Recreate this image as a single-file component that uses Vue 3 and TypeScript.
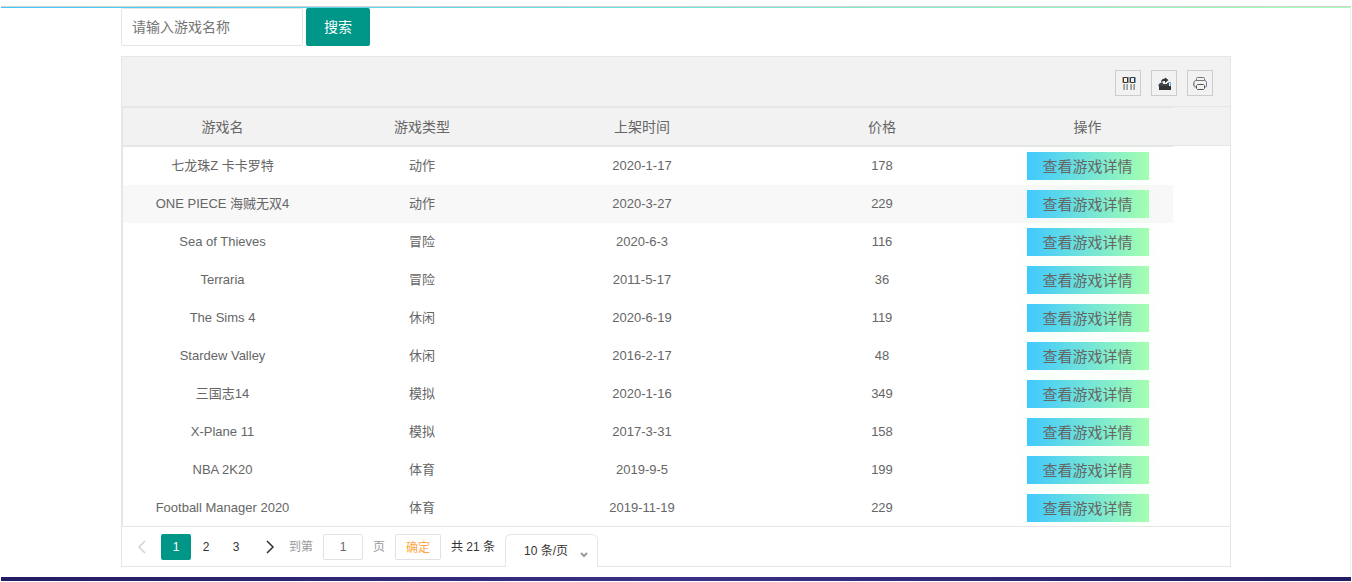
<script setup lang="ts">
import { ref } from 'vue'

interface Game {
  name: string
  type: string
  date: string
  price: number
}

const keyword = ref('')
const currentPage = ref(1)
const jumpPage = ref('1')
const pageSize = ref('10')
const headings = ['游戏名', '游戏类型', '上架时间', '价格', '操作']
const games: Game[] = [
  { name: '七龙珠Z 卡卡罗特', type: '动作', date: '2020-1-17', price: 178 },
  { name: 'ONE PIECE 海贼无双4', type: '动作', date: '2020-3-27', price: 229 },
  { name: 'Sea of Thieves', type: '冒险', date: '2020-6-3', price: 116 },
  { name: 'Terraria', type: '冒险', date: '2011-5-17', price: 36 },
  { name: 'The Sims 4', type: '休闲', date: '2020-6-19', price: 119 },
  { name: 'Stardew Valley', type: '休闲', date: '2016-2-17', price: 48 },
  { name: '三国志14', type: '模拟', date: '2020-1-16', price: 349 },
  { name: 'X-Plane 11', type: '模拟', date: '2017-3-31', price: 158 },
  { name: 'NBA 2K20', type: '体育', date: '2019-9-5', price: 199 },
  { name: 'Football Manager 2020', type: '体育', date: '2019-11-19', price: 229 },
]
</script>

<template>
  <main class="page">
    <div class="content">
      <form class="search" @submit.prevent>
        <input v-model="keyword" class="search-input" type="text" placeholder="请输入游戏名称" aria-label="请输入游戏名称" />
        <button class="search-button" type="submit">搜索</button>
      </form>

      <section class="view">
        <div class="tools">
          <button class="tool" type="button" aria-label="筛选列">
            <svg width="18" height="16" viewBox="0 0 18 16" fill="none">
              <path d="M4.500 2.500h4v5h-4zM11.500 2.500h4v5h-4z" stroke="#333" />
              <path d="M3.500 2v6M10.500 2v6" stroke="#e0a868" />
              <path d="M9.500 2v6M16.500 2v6" stroke="#6aa8dc" />
              <path d="M4.500 9v6M7.500 9v6M11.500 9v6M14.500 9v6" stroke="#e0a868" />
              <path d="M5.500 9v6M8.500 9v6M12.500 9v6M15.500 9v6" stroke="#6aa8dc" />
            </svg>
          </button>
          <button class="tool" type="button" aria-label="导出">
            <svg width="16" height="16" viewBox="0 0 16 16">
              <path d="M3 11h12v4H3z" fill="#333" />
              <path d="M2.500 10.500L5 7.500h2M14.500 11V7.500H12" fill="none" stroke="#6aa8dc" />
              <path d="M2 11l2-3h3v1h4V8h2v3z" fill="#444" />
              <path d="M5 7c0-2 2-3.500 4-3.500V2.500l3.500 2.500L9 8V6C7.500 6 6.500 6.500 5 7z" fill="#333" />
            </svg>
          </button>
          <button class="tool" type="button" aria-label="打印">
            <svg width="16" height="16" viewBox="0 0 16 16" fill="none">
              <path d="M5 5.500h7.500a2 2 0 0 1 2 2V11a1 1 0 0 1-1 1H13M4.500 12H3a1 1 0 0 1-1-1V7.500a2 2 0 0 1 2-2h1" stroke="#777782" />
              <path d="M4.500 5.500V3.500a1 1 0 0 1 1-1h6a1 1 0 0 1 1 1v2" stroke="#777" />
              <path d="M5.500 9.500h6l1 1v3l-1 1h-6l-1-1v-3z" stroke="#555" />
              <path d="M1.500 7.500v3" stroke="#a07868" />
              <path d="M14.500 7.500v3" stroke="#6878a8" />
            </svg>
          </button>
        </div>

        <div class="table-wrap">
          <table>
            <colgroup>
              <col class="col-name" />
              <col class="col-type" />
              <col class="col-date" />
              <col class="col-price" />
              <col class="col-action" />
            </colgroup>
            <thead>
              <tr>
                <th v-for="heading in headings" :key="heading" scope="col">{{ heading }}</th>
              </tr>
            </thead>
            <tbody>
              <tr v-for="(game, index) in games" :key="game.name" :class="{ hovered: index === 1 }">
                <td>{{ game.name }}</td>
                <td>{{ game.type }}</td>
                <td>{{ game.date }}</td>
                <td>{{ game.price }}</td>
                <td class="action"><button class="detail" type="button">查看游戏详情</button></td>
              </tr>
            </tbody>
          </table>
        </div>

        <nav class="pager" aria-label="分页">
          <button class="arrow prev" type="button" disabled aria-label="上一页">
            <svg width="12" height="14" viewBox="0 0 12 14" fill="none" stroke="currentColor" stroke-width="1.500"><path d="M9 1L3 7l6 6" /></svg>
          </button>
          <button
            v-for="page in 3"
            :key="page"
            class="page-number"
            :class="{ current: page === currentPage }"
            type="button"
            @click="currentPage = page"
          >{{ page }}</button>
          <button class="arrow next" type="button" aria-label="下一页">
            <svg width="12" height="14" viewBox="0 0 12 14" fill="none" stroke="currentColor" stroke-width="1.500"><path d="M3 1l6 6-6 6" /></svg>
          </button>
          <label class="jump">到第<input v-model="jumpPage" class="jump-input" type="text" />页</label>
          <button class="confirm" type="button">确定</button>
          <span class="total">共 21 条</span>
          <span class="size">
            <select v-model="pageSize" aria-label="每页条数">
              <option value="10">10 条/页</option>
              <option value="20">20 条/页</option>
              <option value="30">30 条/页</option>
            </select>
            <svg class="caret" width="10" height="8" viewBox="0 0 10 8" fill="none" stroke="#999" stroke-width="2"><path d="M2 2l3 3 3-3" /></svg>
          </span>
        </nav>
      </section>
    </div>
    <div class="footer-line"></div>
  </main>
</template>

<style>
body {
  margin: 0;
  background: #fff;
}
</style>

<style scoped>
.page {
  margin: 6px 1px 0;
  border-top: 1px solid #d2d2d2;
  color: #666;
  font: 14px/24px "Liberation Sans", "Noto Sans CJK SC", sans-serif;
}
.page::before {
  display: block;
  height: 1px;
  background: linear-gradient(90deg, #40c9ff, #a5ffb0);
  content: "";
}
.content {
  box-sizing: border-box;
  padding: 0 119px 10px 120px;
  border-right: 1px solid #eee;
}
* {
  box-sizing: border-box;
}
button,
input,
select {
  margin: 0;
  padding: 0;
  border: 0;
  background: none;
  color: inherit;
  font: inherit;
}
button {
  cursor: pointer;
}
.search {
  display: flex;
  gap: 3px;
  margin-bottom: 10px;
}
.search-input {
  width: 182px;
  height: 38px;
  padding: 0 10px;
  border: 1px solid #e6e6e6;
  border-radius: 2px;
}
.search-input::placeholder {
  color: #757575;
  opacity: 1;
}
.search-button {
  width: 64px;
  height: 38px;
  border-radius: 2px;
  background: #009688;
  color: #fff;
}
.view {
  border: 1px solid #e6e6e6;
}
.tools {
  display: flex;
  justify-content: flex-end;
  align-items: center;
  gap: 10px;
  height: 50px;
  padding: 2px 17px 0;
  border-bottom: 1px solid #e6e6e6;
  background: #f2f2f2;
}
.tool {
  display: flex;
  align-items: center;
  justify-content: center;
  width: 26px;
  height: 26px;
  border: 1px solid #ccc;
}
.table-wrap {
  border-left: 1px solid #e6e6e6;
  background: linear-gradient(#f2f2f2 38px, #e6e6e6 38px, #e6e6e6 39px, #fff 39px);
}
table {
  width: 1050px;
  border-spacing: 0;
  table-layout: fixed;
}
.col-name {
  width: 199px;
}
.col-type {
  width: 200px;
}
.col-date,
.col-price {
  width: 240px;
}
.col-action {
  width: 171px;
}
th {
  height: 40px;
  padding: 0;
  border-top: 1px solid #e6e6e6;
  border-bottom: 2px solid #e6e6e6;
  background: #f2f2f2;
  font-weight: 400;
}
td {
  height: 38px;
  padding: 0;
  font-size: 13px;
  text-align: center;
}
.hovered {
  background: #f8f8f8;
}
.detail {
  display: block;
  width: 122px;
  height: 28px;
  margin: 0 auto;
  padding-top: 2px;
  background: linear-gradient(90deg, #40c9ff, #a5ffb0);
  box-shadow: 0 0 20px rgba(165, 255, 176, 0.1);
  font-size: 15px;
  line-height: 26px;
}
.pager {
  display: flex;
  align-items: flex-start;
  height: 40px;
  margin-top: -1px;
  padding: 7px 7px 0;
  border-top: 1px solid #e6e6e6;
  background: #fff;
  color: #333;
  font-size: 12px;
  line-height: 26px;
}
.arrow {
  display: flex;
  align-items: center;
  justify-content: center;
  height: 26px;
}
.prev {
  width: 26px;
  margin-right: 6px;
  color: #d2d2d2;
}
.next {
  width: 38px;
}
.page-number {
  width: 30px;
  height: 26px;
  border-radius: 2px;
}
.current {
  background: #009688;
  color: #fff;
}
.jump {
  display: flex;
  gap: 10px;
  color: #999;
}
.jump-input {
  width: 40px;
  height: 26px;
  border: 1px solid #e2e2e2;
  border-radius: 2px;
  color: #666;
  text-align: center;
}
.confirm {
  width: 46px;
  height: 26px;
  margin: 0 10px;
  border: 1px solid #e2e2e2;
  border-radius: 2px;
  color: #ffa53e;
}
.total {
  margin-right: 10px;
}
.size {
  position: relative;
}
select {
  display: block;
  width: 93px;
  height: 33px;
  padding: 0 18px;
  border: 1px solid #e6e6e6;
  border-bottom: 0;
  border-radius: 6px 6px 0 0;
  background: #fff;
  appearance: none;
}
.caret {
  position: absolute;
  right: 9px;
  bottom: 8px;
}
.footer-line {
  height: 4px;
  background: linear-gradient(90deg, #241c62, #3a3087 50%, #241c62);
}
</style>
